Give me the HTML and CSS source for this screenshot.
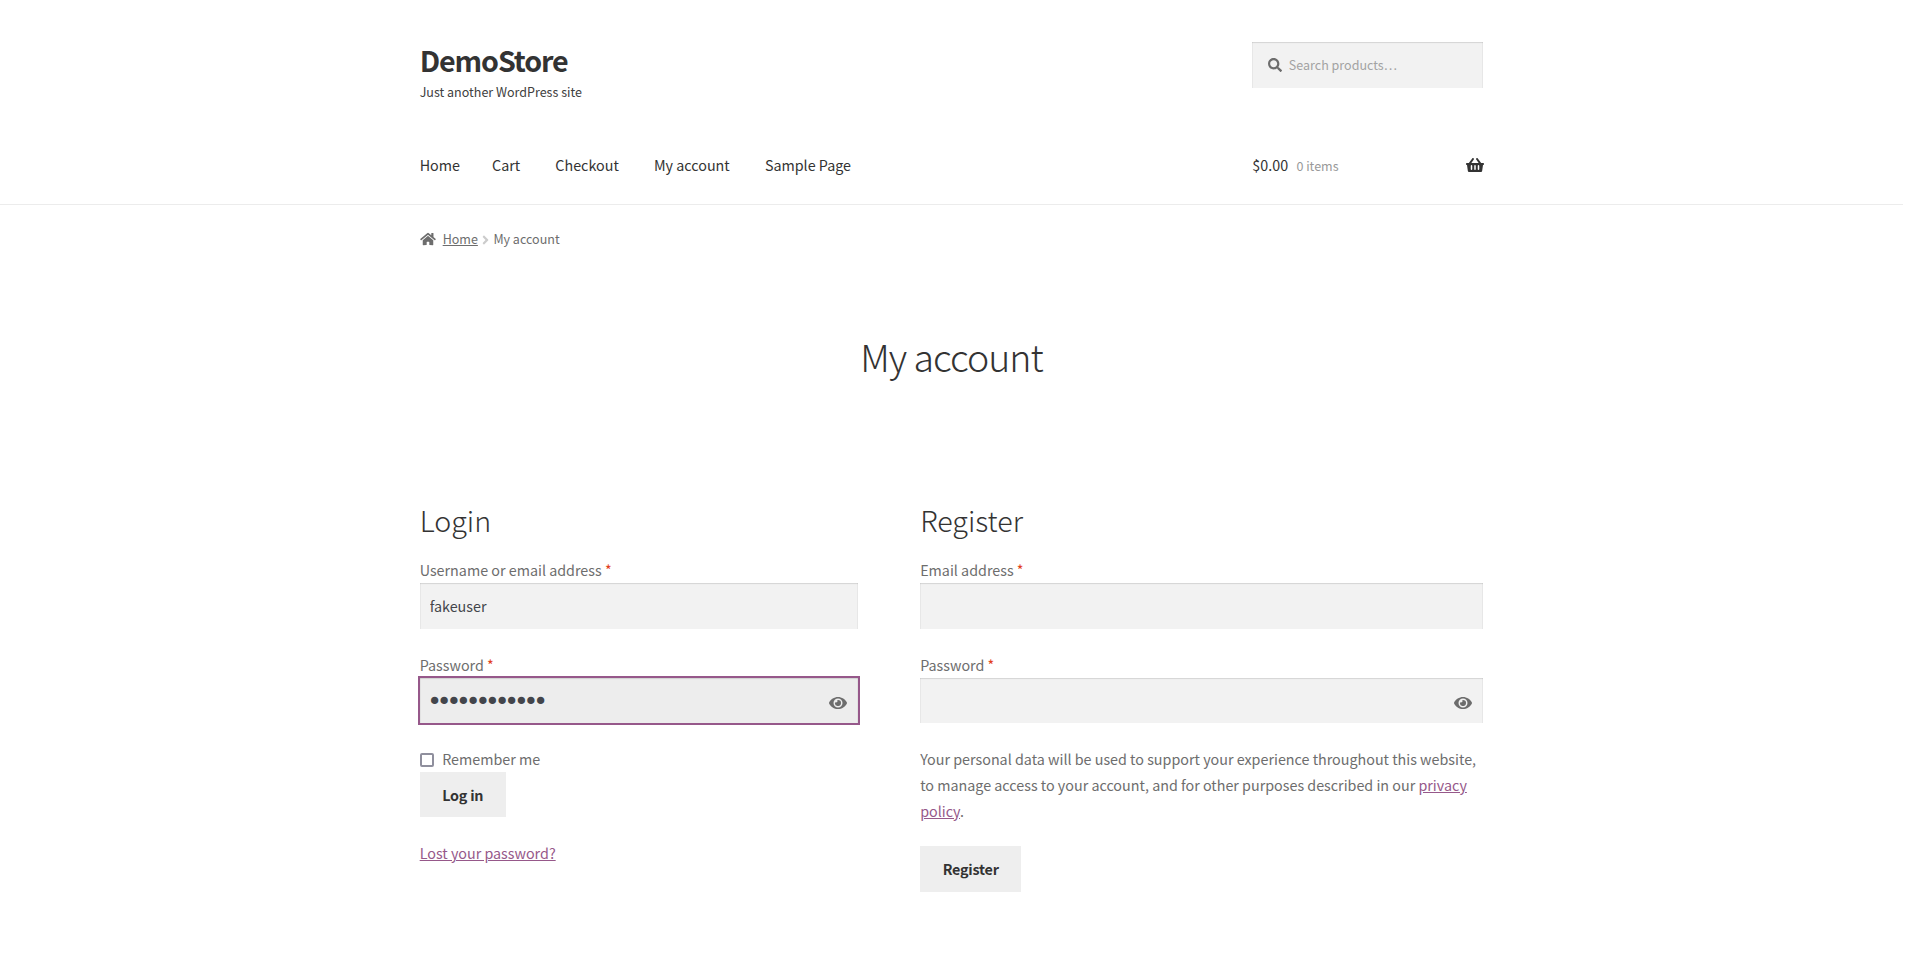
FILE: index.html
```html
<!DOCTYPE html>
<html lang="en">
<head>
<meta charset="utf-8">
<title>My account – DemoStore</title>
<link rel="stylesheet" href="styles.css">
</head>
<body>
<header class="site-header">
  <div class="container header-top">
    <div class="branding">
      <div class="site-title">DemoStore</div>
      <div class="tagline">Just another WordPress site</div>
    </div>
    <div class="search field">
      <svg class="search-icon" viewBox="0 0 512 512"><path d="M505 442.7L405.3 343c-4.5-4.5-10.6-7-17-7H372c27.6-35.3 44-79.7 44-128C416 93.1 322.9 0 208 0S0 93.1 0 208s93.1 208 208 208c48.3 0 92.7-16.4 128-44v16.3c0 6.4 2.5 12.5 7 17l99.7 99.7c9.4 9.4 24.6 9.4 33.9 0l28.3-28.3c9.4-9.4 9.4-24.6.1-34zM208 336c-70.7 0-128-57.2-128-128 0-70.7 57.2-128 128-128 70.7 0 128 57.2 128 128 0 70.7-57.2 128-128 128z"/></svg>
      <input class="search-input" type="search" placeholder="Search products…">
    </div>
  </div>
  <div class="container header-nav">
    <nav class="menu">
      <a class="menu-home">Home</a><a>Cart</a><a>Checkout</a><a>My account</a><a>Sample Page</a>
    </nav>
    <div class="cart">
      <span class="amount">$0.00</span><span class="count">0 items</span>
      <svg class="basket-icon" viewBox="0 0 576 512"><path d="M576 216v16c0 13.255-10.745 24-24 24h-8l-26.113 182.788C514.509 462.435 494.257 480 470.37 480H105.63c-23.887 0-44.139-17.565-47.518-41.212L32 256h-8c-13.255 0-24-10.745-24-24v-16c0-13.255 10.745-24 24-24h67.341l106.78-146.821c10.395-14.292 30.407-17.453 44.701-7.058 14.293 10.395 17.453 30.408 7.058 44.701L170.477 192h235.046L326.12 82.821c-10.395-14.292-7.234-34.306 7.059-44.701 14.291-10.395 34.306-7.235 44.701 7.058L484.659 192H552c13.255 0 24 10.745 24 24zM312 392V280c0-13.255-10.745-24-24-24s-24 10.745-24 24v112c0 13.255 10.745 24 24 24s24-10.745 24-24zm112 0V280c0-13.255-10.745-24-24-24s-24 10.745-24 24v112c0 13.255 10.745 24 24 24s24-10.745 24-24zm-224 0V280c0-13.255-10.745-24-24-24s-24 10.745-24 24v112c0 13.255 10.745 24 24 24s24-10.745 24-24z"/></svg>
    </div>
  </div>
</header>
<main class="container">
  <nav class="breadcrumb">
    <svg class="home-icon" viewBox="0 0 576 512"><path d="M280.37 148.26L96 300.11V464a16 16 0 0 0 16 16l112.06-.29a16 16 0 0 0 15.92-16V368a16 16 0 0 1 16-16h64a16 16 0 0 1 16 16v95.64a16 16 0 0 0 16 16.05L464 480a16 16 0 0 0 16-16V300L295.67 148.26a12.19 12.19 0 0 0-15.3 0zM571.6 251.47L488 182.56V44.05a12 12 0 0 0-12-12h-56a12 12 0 0 0-12 12v72.61L318.47 43a48 48 0 0 0-61 0L4.34 251.47a12 12 0 0 0-1.6 16.9l25.5 31A12 12 0 0 0 45.15 301l235.22-193.74a12.19 12.19 0 0 1 15.3 0L530.9 301a12 12 0 0 0 16.9-1.6l25.5-31a12 12 0 0 0-1.7-16.93z"/></svg>
    <a class="crumb-link">Home</a>
    <svg class="angle-icon" viewBox="0 0 256 512"><path d="M224.3 273l-136 136c-9.4 9.4-24.6 9.4-33.9 0l-22.6-22.6c-9.4-9.4-9.4-24.6 0-33.9l96.4-96.4-96.4-96.4c-9.4-9.4-9.4-24.6 0-33.9L54.3 103c9.4-9.4 24.6-9.4 33.9 0l136 136c9.5 9.4 9.5 24.6.1 34z"/></svg>
    <span>My account</span>
  </nav>
  <h1 class="page-title">My account</h1>
  <div class="columns">
    <section class="login">
      <h2 class="section-title">Login</h2>
      <div class="row">
        <label class="label">Username or email address <span class="required">*</span></label>
        <div class="field"><input class="input" type="text" value="fakeuser"></div>
      </div>
      <div class="row">
        <label class="label">Password <span class="required">*</span></label>
        <div class="field focused">
          <input class="input password" type="password" value="fakepassword">
          <svg class="eye-icon" viewBox="0 0 576 512"><path d="M572.52 241.4C518.29 135.59 410.93 64 288 64S57.68 135.64 3.48 241.41a32.35 32.35 0 0 0 0 29.19C57.71 376.41 165.07 448 288 448s230.32-71.64 284.52-177.41a32.35 32.35 0 0 0 0-29.19zM288 400a144 144 0 1 1 144-144 143.93 143.93 0 0 1-144 144zm0-240a95.31 95.31 0 0 0-25.31 3.79 47.85 47.85 0 0 1-66.9 66.9A95.78 95.78 0 1 0 288 160z"/></svg>
        </div>
      </div>
      <label class="remember"><span class="checkbox"></span>Remember me</label>
      <button class="button">Log in</button>
      <p class="lost"><a class="link">Lost your password?</a></p>
    </section>
    <section class="register">
      <h2 class="section-title">Register</h2>
      <div class="row">
        <label class="label">Email address <span class="required">*</span></label>
        <div class="field"><input class="input" type="email"></div>
      </div>
      <div class="row">
        <label class="label">Password <span class="required">*</span></label>
        <div class="field">
          <input class="input password" type="password">
          <svg class="eye-icon" viewBox="0 0 576 512"><path d="M572.52 241.4C518.29 135.59 410.93 64 288 64S57.68 135.64 3.48 241.41a32.35 32.35 0 0 0 0 29.19C57.71 376.41 165.07 448 288 448s230.32-71.64 284.52-177.41a32.35 32.35 0 0 0 0-29.19zM288 400a144 144 0 1 1 144-144 143.93 143.93 0 0 1-144 144zm0-240a95.31 95.31 0 0 0-25.31 3.79 47.85 47.85 0 0 1-66.9 66.9A95.78 95.78 0 1 0 288 160z"/></svg>
        </div>
      </div>
      <p class="privacy">Your personal data will be used to support your experience throughout this website, to manage access to your account, and for other purposes described in our <a class="link">privacy policy</a>.</p>
      <button class="button register-button">Register</button>
    </section>
  </div>
</main>
</body>
</html>
```
FILE: styles.css
```css
* { box-sizing: border-box; }
html { background: #fff; overflow: hidden; }
body {
  margin: 0;
  width: 1903px;
  font-family: "Source Sans Pro", "Noto Sans CJK SC", "Open Sans", sans-serif;
  font-size: 14.32px;
  line-height: 26px;
  color: #6d6d6d;
}
svg { fill: currentColor; display: block; flex: none; }
h1, h2, p { margin: 0; }
.container { width: 1063.7px; margin: 0 auto; }

.site-header { height: 205px; padding-top: 42px; border-bottom: 1px solid #ececec; color: #333; }
.header-top { display: flex; justify-content: space-between; height: 110px; }
.site-title { font-size: 28.65px; line-height: 36px; font-weight: 700; letter-spacing: -1.1px; }
.tagline { font-size: 12.53px; line-height: 28px; color: #404040; }
.field {
  display: flex;
  align-items: center;
  height: 46px;
  background: #f2f2f2;
  box-shadow: inset 0 1px 1px rgba(0, 0, 0, .125), inset 1px 0 0 rgba(0, 0, 0, .03), inset -1px 0 0 rgba(0, 0, 0, .03);
}
.search { width: 231px; padding-left: 16px; }
.search-icon { width: 14px; height: 14px; color: #6d6d6d; margin-bottom: 1px; }
.search-input {
  flex: 1; min-width: 0; border: 0; outline: 0; background: none;
  padding: 0 0 0 6.5px; font: inherit; font-size: 12.53px; line-height: 26px;
}
.search-input::placeholder { color: #a3a3a3; opacity: 1; }

.header-nav { display: flex; justify-content: space-between; height: 26px; }
.menu { display: flex; gap: 35.2px; }
.menu-home { margin-right: -3.1px; }
.cart { display: flex; width: 231px; align-items: center; }
.count { font-size: 12.53px; margin-left: 8.3px; padding-top: 1px; color: #999; }
.basket-icon { width: 18px; height: 16px; margin: 0 -.5px 1px auto; }

.breadcrumb { display: flex; align-items: center; padding-top: 21px; font-size: 12.53px; }
.home-icon { width: 16px; height: 14px; margin: 0 7px 1px 0; }
.crumb-link { text-decoration: underline; }
.angle-icon { width: 7px; height: 14px; margin: 2px 4px 0 4.5px; color: #ccc; }

.page-title { margin-top: 79px; font-size: 37.5px; line-height: 50px; font-weight: 300; letter-spacing: -1px; text-align: center; color: #333; }

.columns { display: flex; justify-content: space-between; margin-top: 119px; }
.login { width: 438px; }
.register { width: 563.2px; }
.section-title { font-size: 28.65px; line-height: 40px; font-weight: 300; color: #333; margin-bottom: 17px; }
.row { margin-bottom: 23px; }
.label { display: block; }
.required { color: #e2401c; }
.row + .row .field { height: 45px; }
.input {
  flex: 1; min-width: 0; border: 0; outline: 0; background: none;
  padding: 0 10px; font: inherit; line-height: 26px; color: #43454b;
}
.password { padding: 3px 7.5px 0; font-family: "DejaVu Sans", sans-serif; font-size: 25px; line-height: 30px; letter-spacing: -5.1px; }
.focused { background: #ededed; outline: 2px solid #96588a; }
.eye-icon { width: 18px; height: 16px; margin: 4px 11px 0 0; }

.remember { display: flex; align-items: center; gap: 8.5px; }
.checkbox { width: 14px; height: 14px; margin-top: 2px; border: 2px solid #8f8f9d; border-radius: 2px; background: #fff; }
.button {
  display: block; height: 45px; padding: 0 22.5px; border: 0;
  background: #eee; color: #333; font: inherit; font-weight: 600; line-height: 45px; letter-spacing: -.2px;
}
.lost { margin-top: 23px; }
.link { color: #96588a; text-decoration: underline; }
.privacy { margin-bottom: 22px; }
.register-button { height: 46px; line-height: 45px; padding-bottom: 1px; }
```
